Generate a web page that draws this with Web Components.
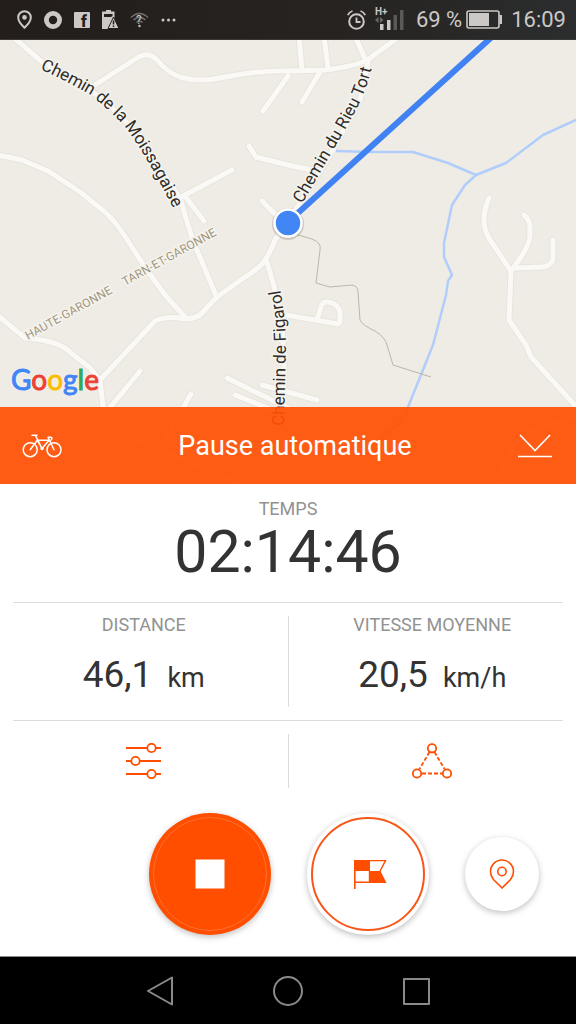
<!DOCTYPE html>
<html lang="fr">
<head>
<meta charset="utf-8">
<meta name="viewport" content="width=device-width, initial-scale=1">
<title>Pause automatique</title>
<style>
  body {
    margin: 0;
    font-family: Roboto, "Liberation Sans", sans-serif;
    color: #333;
    background: #fff;
    --accent: #ff4e00;
    --line: #dcdcdc;
  }
</style>
</head>
<body>
<ride-screen></ride-screen>

<script>
// StatusBar
class StatusBar extends HTMLElement {
  constructor() {
    super();
    this.attachShadow({ mode: "open" }).innerHTML = `
      <style>
        :host {
          display: flex;
          justify-content: space-between;
          align-items: center;
          box-sizing: border-box;
          height: 40px;
          padding: 0 10px 0 17px;
          background: linear-gradient(90deg, #231e1b, #262321 60%, #2b2d2e);
          border-bottom: 1px solid #3b3735;
          color: #cbc8c6;
          font-size: 22px;
          line-height: 40px;
        }
        svg { display: block; overflow: visible; }
        .left { display: flex; align-items: center; gap: 12px; }
        .right { display: flex; align-items: center; gap: 9px; }
        .level { display: flex; align-items: center; gap: 4px; margin-left: 3px; }
      </style>
      <div class="left">
        <svg width="15" height="19" viewBox="0 0 15 19" aria-hidden="true">
          <path d="M7.5 1.2C4 1.2 1.2 4 1.2 7.4c0 4.300 6.300 10.300 6.300 10.300s6.300-6 6.300-10.300C13.800 4 11 1.200 7.500 1.200z" fill="none" stroke="currentColor" stroke-width="2"/>
          <circle cx="7.500" cy="7.400" r="2.300" fill="currentColor"/>
        </svg>
        <svg width="18" height="18" viewBox="0 0 18 18" aria-hidden="true">
          <circle cx="9" cy="9" r="6.600" fill="none" stroke="currentColor" stroke-width="4.800"/>
        </svg>
        <svg width="16" height="16" viewBox="0 0 16 16" aria-hidden="true">
          <rect width="16" height="16" rx="1" fill="currentColor"/>
          <text x="7" y="15" font-size="16" font-weight="900" fill="#231f1c">f</text>
        </svg>
        <svg width="16" height="19" viewBox="0 0 16 19" aria-hidden="true">
          <path d="M4 0h5v1.500h3.500V8L8 17v2H0V1.500h4z" fill="currentColor"/>
          <path d="M2 4h8.500v2L9 7H2z" fill="#231f1c"/>
          <path d="M11.500 7L17 18.500H6z" fill="currentColor" stroke="#231f1c"/>
          <path d="M11.500 10.500v4M11.500 15.500v1.500" stroke="#231f1c" stroke-width="1.500"/>
        </svg>
        <svg width="19" height="16" viewBox="0 0 19 16" aria-hidden="true">
          <g fill="none" stroke="#77726f" stroke-width="1.500">
            <path d="M1 5.500Q9.500-2.500 18 5.500"/>
            <path d="M3.500 8Q9.500 2.500 15.500 8"/>
            <path d="M6.500 10.500Q9.500 8 12.500 10.500"/>
          </g>
          <text x="6" y="12" font-size="12" fill="currentColor">?</text>
          <circle cx="9.500" cy="14" r="1.200" fill="currentColor"/>
        </svg>
        <svg width="15" height="4" viewBox="0 0 15 4" fill="currentColor" aria-hidden="true">
          <circle cx="2" cy="2" r="1.500"/><circle cx="7.500" cy="2" r="1.500"/><circle cx="13" cy="2" r="1.500"/>
        </svg>
      </div>
      <div class="right">
        <svg width="19" height="20" viewBox="0 0 19 20" fill="none" stroke="currentColor" aria-hidden="true">
          <circle cx="9.500" cy="11.500" r="7.300" stroke-width="2"/>
          <path d="M9.500 7.500v4.500h4" stroke-width="1.800"/>
          <path d="M.8 5.200Q2.200 2 5.500 1M18.200 5.200Q16.800 2 13.500 1" stroke-width="1.800"/>
        </svg>
        <svg width="29" height="28" viewBox="0 0 29 28" aria-hidden="true">
          <text x="0" y="9" font-size="10" font-weight="700" fill="currentColor">H+</text>
          <path d="M0 14l3.500-3v6zM8.500 14L5 11v6z" fill="#6b6866"/>
          <path d="M5 18h3.500v6H5zM12 14h3.500v10H12z" fill="currentColor"/>
          <path d="M18.500 9H22v15h-3.500zM25 4h3.500v20H25z" fill="#5b5856"/>
        </svg>
        <div class="level">
          <span>69&nbsp;%</span>
          <svg width="36" height="19" viewBox="0 0 36 19" aria-hidden="true">
            <rect x="1" y="1" width="32" height="17" rx="2" fill="none" stroke="currentColor" stroke-width="1.600"/>
            <path d="M3 3h20v13H3zM33.500 5H36v9h-2.500z" fill="currentColor"/>
          </svg>
        </div>
        <time>16:09</time>
      </div>
    `;
  }
}
customElements.define("status-bar", StatusBar);

// MapView: the slot takes whatever is laid over the bottom of the map
class MapView extends HTMLElement {
  constructor() {
    super();
    this.attachShadow({ mode: "open" }).innerHTML = `
      <style>
        :host {
          display: flex;
          flex-direction: column;
          justify-content: flex-end;
          position: relative;
          overflow: hidden;
          min-height: 320px;
          background: #efece5;
        }
        .canvas { position: absolute; inset: 0; width: 100%; height: 100%; }
        .casing { stroke: #e8e4dd; stroke-width: 7; }
        .road { stroke: #faf9f5; stroke-width: 5; }
        .street { font-size: 17px; fill: #2e2c29; stroke: #f5f3ee; stroke-width: 3; paint-order: stroke; }
        .region { font-size: 12px; fill: #a0967e; stroke: #f5f3ee; stroke-width: 3; paint-order: stroke; }
        .logo {
          position: relative;
          margin-left: 11px;
          padding-bottom: 10px;
          font: 400 28px/36px Lato, sans-serif;
          -webkit-text-stroke: 1px currentColor;
          text-shadow: 0 0 2px #fff, 0 0 2px #fff;
        }
        .b { color: #4285f4; }
        .r { color: #ea4335; }
        .y { color: #fbbc05; }
        .g { color: #34a853; }
        ::slotted(*) { position: relative; }
      </style>
      <svg class="canvas" viewBox="0 40 576 444" preserveAspectRatio="xMidYMid slice">
        <defs>
          <g id="roads" fill="none" stroke-linejoin="round" stroke-linecap="round">
            <path d="M12 36L42 62Q110 95 140 140L180 198L192 238L217 298"/>
            <path d="M90 88L137 58Q148 51 157 60Q168 73 180 77Q200 83 225 77Q262 70 288 71L325 70Q350 67 366 61L400 36"/>
            <path d="M263 111L288 76M302 102L320 72M299 36L302 70M324 36L328 68M355 36L366 61"/>
            <path d="M368 62L360 100L330 155L288 222L275 240Q268 258 262 264Q255 271 245 277L217 297L200 315Q190 321 180 318Q165 316 155 321L100 380L103 407Q115 430 150 445T240 484"/>
            <path d="M-4 155Q10 157 22 160L48 171L80 192L105 212Q116 222 126 238L145 267L165 295L186 318"/>
            <path d="M-4 314L25 338Q52 340 65 348L90 368L100 380"/>
            <path d="M267 262L275 290Q285 330 284 380L282 420"/>
            <path d="M183 196L232 170M185 196L204 221M249 146L256 157L288 165L312 170M262 201L276 215"/>
            <path d="M140 371L108 410M191 394L165 440M227 378L288 408M235 395L285 415M262 385L317 400"/>
            <path d="M280 314L338 324L340 322V312Q337 302 326 302Q322 302 321 307L317 320"/>
            <path d="M489 198Q484 210 484 220Q484 230 490 240L511 271Q530 246 530 236V226Q529 219 524 215"/>
            <path d="M516 268L543 267Q553 265 553 258V240"/>
            <path d="M511 271L509 320L526 345L531 357L580 411"/>
            <path d="M500 484Q505 440 545 425L580 415"/>
          </g>
          <path id="moissagaise" d="M40 69Q66 81 89 94Q110 110 126 128Q148 158 173 208"/>
          <path id="tort" d="M302 204L331 154Q350 122 359 104Q368 86 374 58"/>
          <path id="figarol" d="M284 426L286 345Q286 320 279 282"/>
          <path id="haute" d="M28 340L134 281"/>
          <path id="tarn" d="M125 286L235 225"/>
        </defs>
        <use href="#roads" class="casing"/>
        <use href="#roads" class="road"/>
        <g fill="none" stroke="#b1cdfb" stroke-width="2.500" stroke-linejoin="round">
          <path d="M336 151L370 152H413L448 163L476 175"/>
          <path d="M580 118L543 135L506 163L476 175L465 185L452 205L444 243V257L452 275L448 281L446 295L433 345L408 407L403 420L380 440"/>
        </g>
        <path d="M288 232L312 239Q322 243 320 250L316 283L330 287L352 285Q358 286 358 292L360 320Q362 325 375 331Q385 337 387 345L393 365L431 377" fill="none" stroke="#bdb6a8"/>
        <text class="street"><textPath href="#moissagaise">Chemin de la Moissagaise</textPath></text>
        <text class="street"><textPath href="#tort">Chemin du Rieu Tort</textPath></text>
        <text class="street"><textPath href="#figarol">Chemin de Figarol</textPath></text>
        <text class="region"><textPath href="#haute">HAUTE-GARONNE</textPath></text>
        <text class="region"><textPath href="#tarn">TARN-ET-GARONNE</textPath></text>
        <path d="M288 222L494 35" stroke="#4182f3" stroke-width="6"/>
        <circle cx="288" cy="224" r="16" fill="#000" opacity=".15"/>
        <circle cx="288" cy="223" r="13.500" fill="#4285f4" stroke="#fff" stroke-width="2.500"/>
      </svg>
      <div class="logo"><span class="b">G</span><span class="r">o</span><span class="y">o</span><span class="b">g</span><span class="g">l</span><span class="r">e</span></div>
      <slot></slot>
    `;
  }
}
customElements.define("map-view", MapView);

// ActivityBar
class ActivityBar extends HTMLElement {
  constructor() {
    super();
    this.attachShadow({ mode: "open" }).innerHTML = `
      <style>
        :host {
          display: grid;
          grid-template-columns: 84px 1fr 70px;
          align-items: center;
          height: 77px;
          background: rgba(255, 80, 4, .93);
          color: #fff;
        }
        button {
          display: flex;
          align-items: center;
          height: 100%;
          margin: 0;
          padding: 0 24px 0 22px;
          border: 0;
          background: none;
          color: inherit;
          cursor: pointer;
        }
        .down { justify-content: flex-end; padding-left: 0; }
        h1 {
          margin: 0;
          font-size: 27px;
          font-weight: 400;
          line-height: 36px;
          text-align: center;
        }
        svg { flex: none; }
      </style>
      <button type="button" aria-label="Vélo">
        <svg width="40" height="24" viewBox="0 0 40 24" fill="none" stroke="currentColor" stroke-width="1.500" stroke-linecap="round" stroke-linejoin="round">
          <circle cx="8.200" cy="15.700" r="7"/>
          <circle cx="32" cy="15.700" r="7"/>
          <path d="M10 1.200h5M13.300 1.200L20 14.500M8.200 15.700L15.300 6.200H27L20 14.500L15.300 6.200M32 15.700L26 3.200h3q2 .8 0 2.800"/>
          <circle cx="20" cy="14.500" r="1"/>
        </svg>
      </button>
      <h1><slot></slot></h1>
      <button type="button" class="down" aria-label="Réduire">
        <svg width="34" height="24" viewBox="0 0 34 24" fill="none" stroke="currentColor" stroke-width="1.600">
          <path d="M2 1L17 16.500L32 1M0 22.500h34"/>
        </svg>
      </button>
    `;
  }
}
customElements.define("activity-bar", ActivityBar);

// RideMetric: label and value, an optional unit, "large" for the main one
class RideMetric extends HTMLElement {
  constructor() {
    super();
    this.attachShadow({ mode: "open" }).innerHTML = `
      <style>
        :host { display: block; text-align: center; padding: 11px 0 21px; }
        .label { font-size: 18px; line-height: 22px; color: #929292; }
        .value { margin-top: 15px; font-size: 37px; line-height: 48px; }
        .unit { margin-left: 15px; font-size: 27px; line-height: 27px; }
        :host([large]) { padding: 14px 0 18px; }
        :host([large]) .value { margin-top: 0; font-size: 59px; line-height: 64px; }
      </style>
      <div class="label"></div>
      <div class="value"><slot></slot></div>
    `;
  }

  connectedCallback() {
    this.shadowRoot.querySelector(".label").textContent = this.getAttribute("label");
    const unit = this.getAttribute("unit");
    if (unit) {
      const span = document.createElement("span");
      span.className = "unit";
      span.textContent = unit;
      this.shadowRoot.querySelector(".value").append(span);
    }
  }
}
customElements.define("ride-metric", RideMetric);

// SplitRow: two equal halves with a vertical rule between them
class SplitRow extends HTMLElement {
  constructor() {
    super();
    this.attachShadow({ mode: "open" }).innerHTML = `
      <style>
        :host { display: grid; grid-template-columns: 1fr 1px 1fr; }
        .rule { margin: 13px 0; background: var(--line); }
      </style>
      <slot name="start"></slot>
      <div class="rule"></div>
      <slot name="end"></slot>
    `;
  }
}
customElements.define("split-row", SplitRow);

// RoundButton
class RoundButton extends HTMLElement {
  constructor() {
    super();
    this.attachShadow({ mode: "open" }).innerHTML = `
      <style>
        :host { display: block; }
        button {
          display: grid;
          place-items: center;
          box-sizing: border-box;
          width: 122px;
          height: 122px;
          padding: 4px;
          border: 0;
          border-radius: 50%;
          background: #fff;
          box-shadow: 0 2px 6px rgba(0, 0, 0, .25);
          color: var(--accent);
          cursor: pointer;
        }
        .ring {
          display: grid;
          place-items: center;
          box-sizing: border-box;
          width: 100%;
          height: 100%;
          border: 2px solid #f7571a;
          border-radius: 50%;
        }
        :host([filled]) button { background: var(--accent); color: #fff; }
        :host([filled]) .ring { border: 1px solid #ff6f30; }
        :host([small]) button { width: 74px; height: 74px; }
        :host([small]) .ring { border: 0; }
      </style>
      <button type="button"><span class="ring"><slot></slot></span></button>
    `;
  }

  connectedCallback() {
    this.shadowRoot.querySelector("button").setAttribute("aria-label", this.getAttribute("label"));
  }
}
customElements.define("round-button", RoundButton);

// NavBar
class NavBar extends HTMLElement {
  constructor() {
    super();
    this.attachShadow({ mode: "open" }).innerHTML = `
      <style>
        :host {
          display: flex;
          justify-content: center;
          box-sizing: border-box;
          height: 68px;
          background: #000;
          border-top: 1px solid #8c8c8c;
        }
        button {
          display: grid;
          place-items: center;
          width: 128px;
          padding: 0;
          border: 0;
          background: none;
          color: #8a8a8a;
          cursor: pointer;
        }
        svg { fill: none; stroke: currentColor; stroke-width: 2; stroke-linejoin: round; }
      </style>
      <button type="button" aria-label="Retour">
        <svg width="30" height="30" viewBox="0 0 30 30"><path d="M3 15L27 1.500V28.500z"/></svg>
      </button>
      <button type="button" aria-label="Accueil">
        <svg width="30" height="30" viewBox="0 0 30 30"><circle cx="15" cy="15" r="14"/></svg>
      </button>
      <button type="button" aria-label="Applications récentes">
        <svg width="30" height="30" viewBox="0 0 30 30"><rect x="3" y="3" width="25" height="25"/></svg>
      </button>
    `;
  }
}
customElements.define("nav-bar", NavBar);

// RideScreen
class RideScreen extends HTMLElement {
  constructor() {
    super();
    this.attachShadow({ mode: "open" }).innerHTML = `
      <style>
        :host { display: flex; flex-direction: column; min-height: 100vh; }
        map-view { flex: 1; }
        hr { height: 1px; margin: 0 13px; border: 0; background: var(--line); }
        svg { display: block; }
        .tool {
          display: grid;
          place-items: center;
          height: 80px;
          padding: 0;
          border: 0;
          background: none;
          color: var(--accent);
          cursor: pointer;
        }
        .actions {
          display: flex;
          justify-content: flex-end;
          align-items: center;
          gap: 36px;
          padding: 12px 37px 21px;
        }
      </style>
      <status-bar></status-bar>
      <map-view>
        <activity-bar>Pause automatique</activity-bar>
      </map-view>
      <main>
        <ride-metric label="TEMPS" large>02:14:46</ride-metric>
        <hr>
        <split-row>
          <ride-metric slot="start" label="DISTANCE" unit="km">46,1</ride-metric>
          <ride-metric slot="end" label="VITESSE MOYENNE" unit="km/h">20,5</ride-metric>
        </split-row>
        <hr>
        <split-row>
          <button type="button" class="tool" slot="start" aria-label="Réglages">
            <svg width="36" height="36" viewBox="0 0 36 36" fill="none" stroke="currentColor" stroke-width="1.800">
              <path d="M0 5h21M30 5h5M0 18h5M14 18h21M0 31h21M30 31h5"/>
              <circle cx="25.500" cy="5" r="4.200"/><circle cx="9.500" cy="18" r="4.200"/><circle cx="25.500" cy="31" r="4.200"/>
            </svg>
          </button>
          <button type="button" class="tool" slot="end" aria-label="Parcours">
            <svg width="40" height="36" viewBox="0 0 40 36" fill="none" stroke="currentColor" stroke-width="1.800">
              <path d="M17.500 9L7.500 26M22.500 9L32.500 26M10 30.500h20" stroke-dasharray="4 2"/>
              <circle cx="20" cy="5.300" r="4.200"/><circle cx="5" cy="30.500" r="4.200"/><circle cx="35" cy="30.500" r="4.200"/>
            </svg>
          </button>
        </split-row>
        <div class="actions">
          <round-button label="Arrêter" filled>
            <svg width="30" height="30" viewBox="0 0 30 30"><path d="M.5.5h29v29H.5z" fill="currentColor"/></svg>
          </round-button>
          <round-button label="Tour">
            <svg width="28" height="28" viewBox="0 0 28 28" overflow="visible">
              <path d="M0 0h1.600v29H0zM1 0h15v11H1zM16 11h10.500l6 12H16z" fill="currentColor"/>
              <path d="M0 .6h31.500L26 11.200M16 22.200H0M15.500 11v12" fill="none" stroke="currentColor" stroke-width="1.400"/>
            </svg>
          </round-button>
          <round-button label="Position" small>
            <svg width="26" height="30" viewBox="0 0 26 30" fill="none" stroke="currentColor" stroke-width="1.600">
              <path d="M13 29L4.500 20.500Q1.500 17 1.500 12.500a11.500 11.500 0 0 1 23 0Q24.500 17 21.500 20.500z"/>
              <circle cx="13" cy="12.500" r="4.200"/>
            </svg>
          </round-button>
        </div>
      </main>
      <nav-bar></nav-bar>
    `;
  }
}
customElements.define("ride-screen", RideScreen);
</script>
</body>
</html>
